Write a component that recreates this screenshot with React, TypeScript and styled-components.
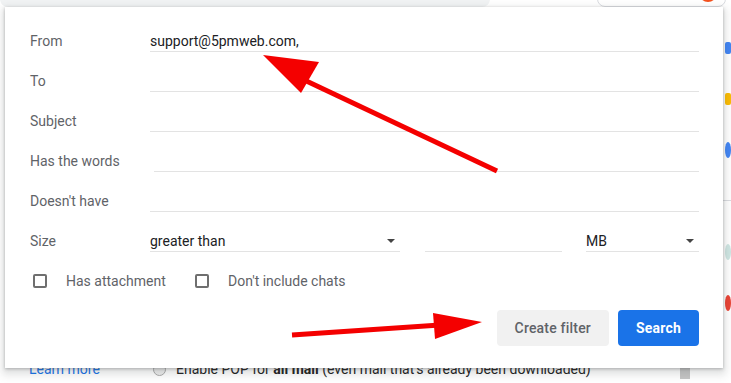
import React from 'react';
import styled, {createGlobalStyle} from 'styled-components';

const GlobalStyle = createGlobalStyle`
  html, body {
    margin: 0;
    padding: 0;
    background: #fff;
  }
  body {
    font-family: Roboto, "Noto Sans", Arial, sans-serif;
  }
`;

const Page = styled.div`
  position: relative;
  width: 731px;
  height: 383px;
  overflow: hidden;
  background: #fff;
  display: flex;
  flex-direction: column;
`;

/* ---------- page behind the dialog ---------- */

const TopStrip = styled.div`
  height: 7px;
  flex: none;
  display: flex;
  align-items: flex-end;
  overflow: hidden;
`;

const SearchBar = styled.div`
  width: 490px;
  height: 48px;
  flex: none;
  background: #f1f3f4;
  border-radius: 8px;
`;

const AccountBox = styled.div`
  margin-left: 107px;
  width: 129px;
  height: 40px;
  flex: none;
  box-sizing: border-box;
  border: 1px solid #dadce0;
  border-radius: 8px;
  display: flex;
  align-items: flex-end;
  justify-content: flex-end;
  padding: 0 8px 4px 0;
`;

const Avatar = styled.div`
  width: 18px;
  height: 18px;
  border-radius: 50%;
  background: #f4511e;
`;

const Body = styled.div`
  flex: 1;
  display: flex;
`;

const Content = styled.div`
  flex: 1;
  display: flex;
  flex-direction: column;
  justify-content: flex-end;
`;

const BottomRow = styled.div`
  height: 20px;
  margin-bottom: 4px;
  display: flex;
  align-items: center;
  padding-left: 29px;
  font-size: 14px;
  color: #222;
`;

const LearnMore = styled.span`
  width: 124px;
  color: #1a73e8;
`;

const Radio = styled.span`
  width: 11px;
  height: 11px;
  border-radius: 50%;
  border: 1px solid #aaa;
  background: #eee;
`;

const PopText = styled.span`
  margin-left: 10px;
  b {
    font-weight: 700;
  }
`;

const Scrollbar = styled.div`
  margin-left: auto;
  margin-right: 33px;
  width: 10px;
  height: 20px;
  background: #c6c6c6;
  align-self: flex-start;
`;

const SideRail = styled.div`
  width: 8px;
  flex: none;
  display: flex;
  flex-direction: column;
  padding-top: 15px;
`;

const RailSlot = styled.div`
  height: 51px;
  display: flex;
  align-items: center;
`;

const RailIcon = styled.div<{$color: string; $round?: boolean}>`
  width: 16px;
  height: ${p => (p.$round ? '16px' : '12px')};
  margin-left: 2px;
  border-radius: ${p => (p.$round ? '50%' : '2px')};
  background: ${p => p.$color};
`;

const RailLine = styled.div`
  width: 100%;
  height: 1px;
  background: #dadce0;
`;

/* ---------- filter dialog ---------- */

const Dialog = styled.div`
  position: absolute;
  left: 5px;
  top: 7px;
  width: 718px;
  height: 361px;
  box-sizing: border-box;
  background: #fff;
  box-shadow: 0 1px 3px 0 rgba(60, 64, 67, 0.35),
    0 4px 8px 3px rgba(60, 64, 67, 0.15);
  padding: 14px 24px 0 25px;
  display: flex;
  flex-direction: column;
`;

const Row = styled.div`
  display: flex;
  align-items: center;
  height: 40px;
`;

const Label = styled.div`
  width: 120px;
  flex: none;
  font-size: 14px;
  color: #5f6368;
`;

const Field = styled.div<{$width?: number; $indent?: number}>`
  flex: ${p => (p.$width ? 'none' : '1')};
  width: ${p => (p.$width ? `${p.$width}px` : 'auto')};
  margin-left: ${p => p.$indent || 0}px;
  height: 21px;
  box-sizing: border-box;
  border-bottom: 1px solid #e3e3e3;
  display: flex;
  align-items: center;
  justify-content: space-between;
  font-size: 14px;
  color: #202124;
`;

const Gap = styled.div<{$w: number}>`
  width: ${p => p.$w}px;
  flex: none;
`;

const Caret = styled.span`
  width: 0;
  height: 0;
  margin-right: 5px;
  border-left: 4px solid transparent;
  border-right: 4px solid transparent;
  border-top: 4px solid #444;
`;

const CheckRow = styled.div`
  display: flex;
  align-items: center;
  height: 40px;
  padding-left: 3px;
`;

const CheckItem = styled.label<{$width?: number}>`
  display: flex;
  align-items: center;
  width: ${p => (p.$width ? `${p.$width}px` : 'auto')};
  font-size: 14px;
  color: #5f6368;
`;

const Box = styled.span`
  width: 14px;
  height: 14px;
  box-sizing: border-box;
  border: 2px solid #6f6f6f;
  border-radius: 2px;
  margin-right: 19px;
  flex: none;
`;

const Actions = styled.div`
  display: flex;
  justify-content: flex-end;
  gap: 9px;
  margin-top: 9px;
`;

const Button = styled.button<{$primary?: boolean}>`
  height: 36px;
  padding: 0 18px;
  border: none;
  border-radius: 4px;
  font-family: Roboto, Arial, sans-serif;
  font-size: 14px;
  font-weight: ${p => (p.$primary ? 700 : 500)};
  letter-spacing: 0.2px;
  background: ${p => (p.$primary ? '#1a73e8' : '#f1f1f1')};
  color: ${p => (p.$primary ? '#fff' : '#5f6368')};
`;

const Annotations = styled.svg`
  position: absolute;
  left: 0;
  top: 0;
  pointer-events: none;
`;

const fields = [
  {label: 'From', value: 'support@5pmweb.com,'},
  {label: 'To'},
  {label: 'Subject'},
  {label: 'Has the words', indent: 4},
  {label: "Doesn't have"},
];

export default function App() {
  return (
    <Page>
      <GlobalStyle />
      <TopStrip>
        <SearchBar />
        <AccountBox>
          <Avatar />
        </AccountBox>
      </TopStrip>
      <Body>
        <Content>
          <BottomRow>
            <LearnMore>Learn more</LearnMore>
            <Radio />
            <PopText>
              Enable POP for <b>all mail</b> (even mail that's already been
              downloaded)
            </PopText>
            <Scrollbar />
          </BottomRow>
        </Content>
        <SideRail>
          <RailSlot>
            <RailIcon $color="#4285f4" />
          </RailSlot>
          <RailSlot>
            <RailIcon $color="#fbbc04" />
          </RailSlot>
          <RailSlot>
            <RailIcon $color="#4285f4" $round />
          </RailSlot>
          <RailSlot>
            <RailLine />
          </RailSlot>
          <RailSlot>
            <RailIcon $color="#cfe6e3" $round />
          </RailSlot>
          <RailSlot>
            <RailIcon $color="#ea4335" $round />
          </RailSlot>
        </SideRail>
      </Body>

      <Dialog>
        {fields.map(f => (
          <Row key={f.label}>
            <Label>{f.label}</Label>
            <Field $indent={f.indent}>{f.value}</Field>
          </Row>
        ))}
        <Row>
          <Label>Size</Label>
          <Field $width={250}>
            greater than
            <Caret />
          </Field>
          <Gap $w={25} />
          <Field $width={137} />
          <Gap $w={24} />
          <Field $width={113}>
            MB
            <Caret />
          </Field>
        </Row>
        <CheckRow>
          <CheckItem $width={162}>
            <Box />
            Has attachment
          </CheckItem>
          <CheckItem>
            <Box />
            Don't include chats
          </CheckItem>
        </CheckRow>
        <Actions>
          <Button>Create filter</Button>
          <Button $primary>Search</Button>
        </Actions>
      </Dialog>

      <Annotations width={731} height={383} viewBox="0 0 731 383">
        <line
          x1={497}
          y1={171}
          x2={300}
          y2={78}
          stroke="#f40000"
          strokeWidth={5}
        />
        <polygon points="263,55 319,62 301,93" fill="#f40000" />
        <line
          x1={292}
          y1={335}
          x2={440}
          y2={325}
          stroke="#f40000"
          strokeWidth={5}
        />
        <polygon points="482,322 433,313 435,339" fill="#f40000" />
      </Annotations>
    </Page>
  );
}
